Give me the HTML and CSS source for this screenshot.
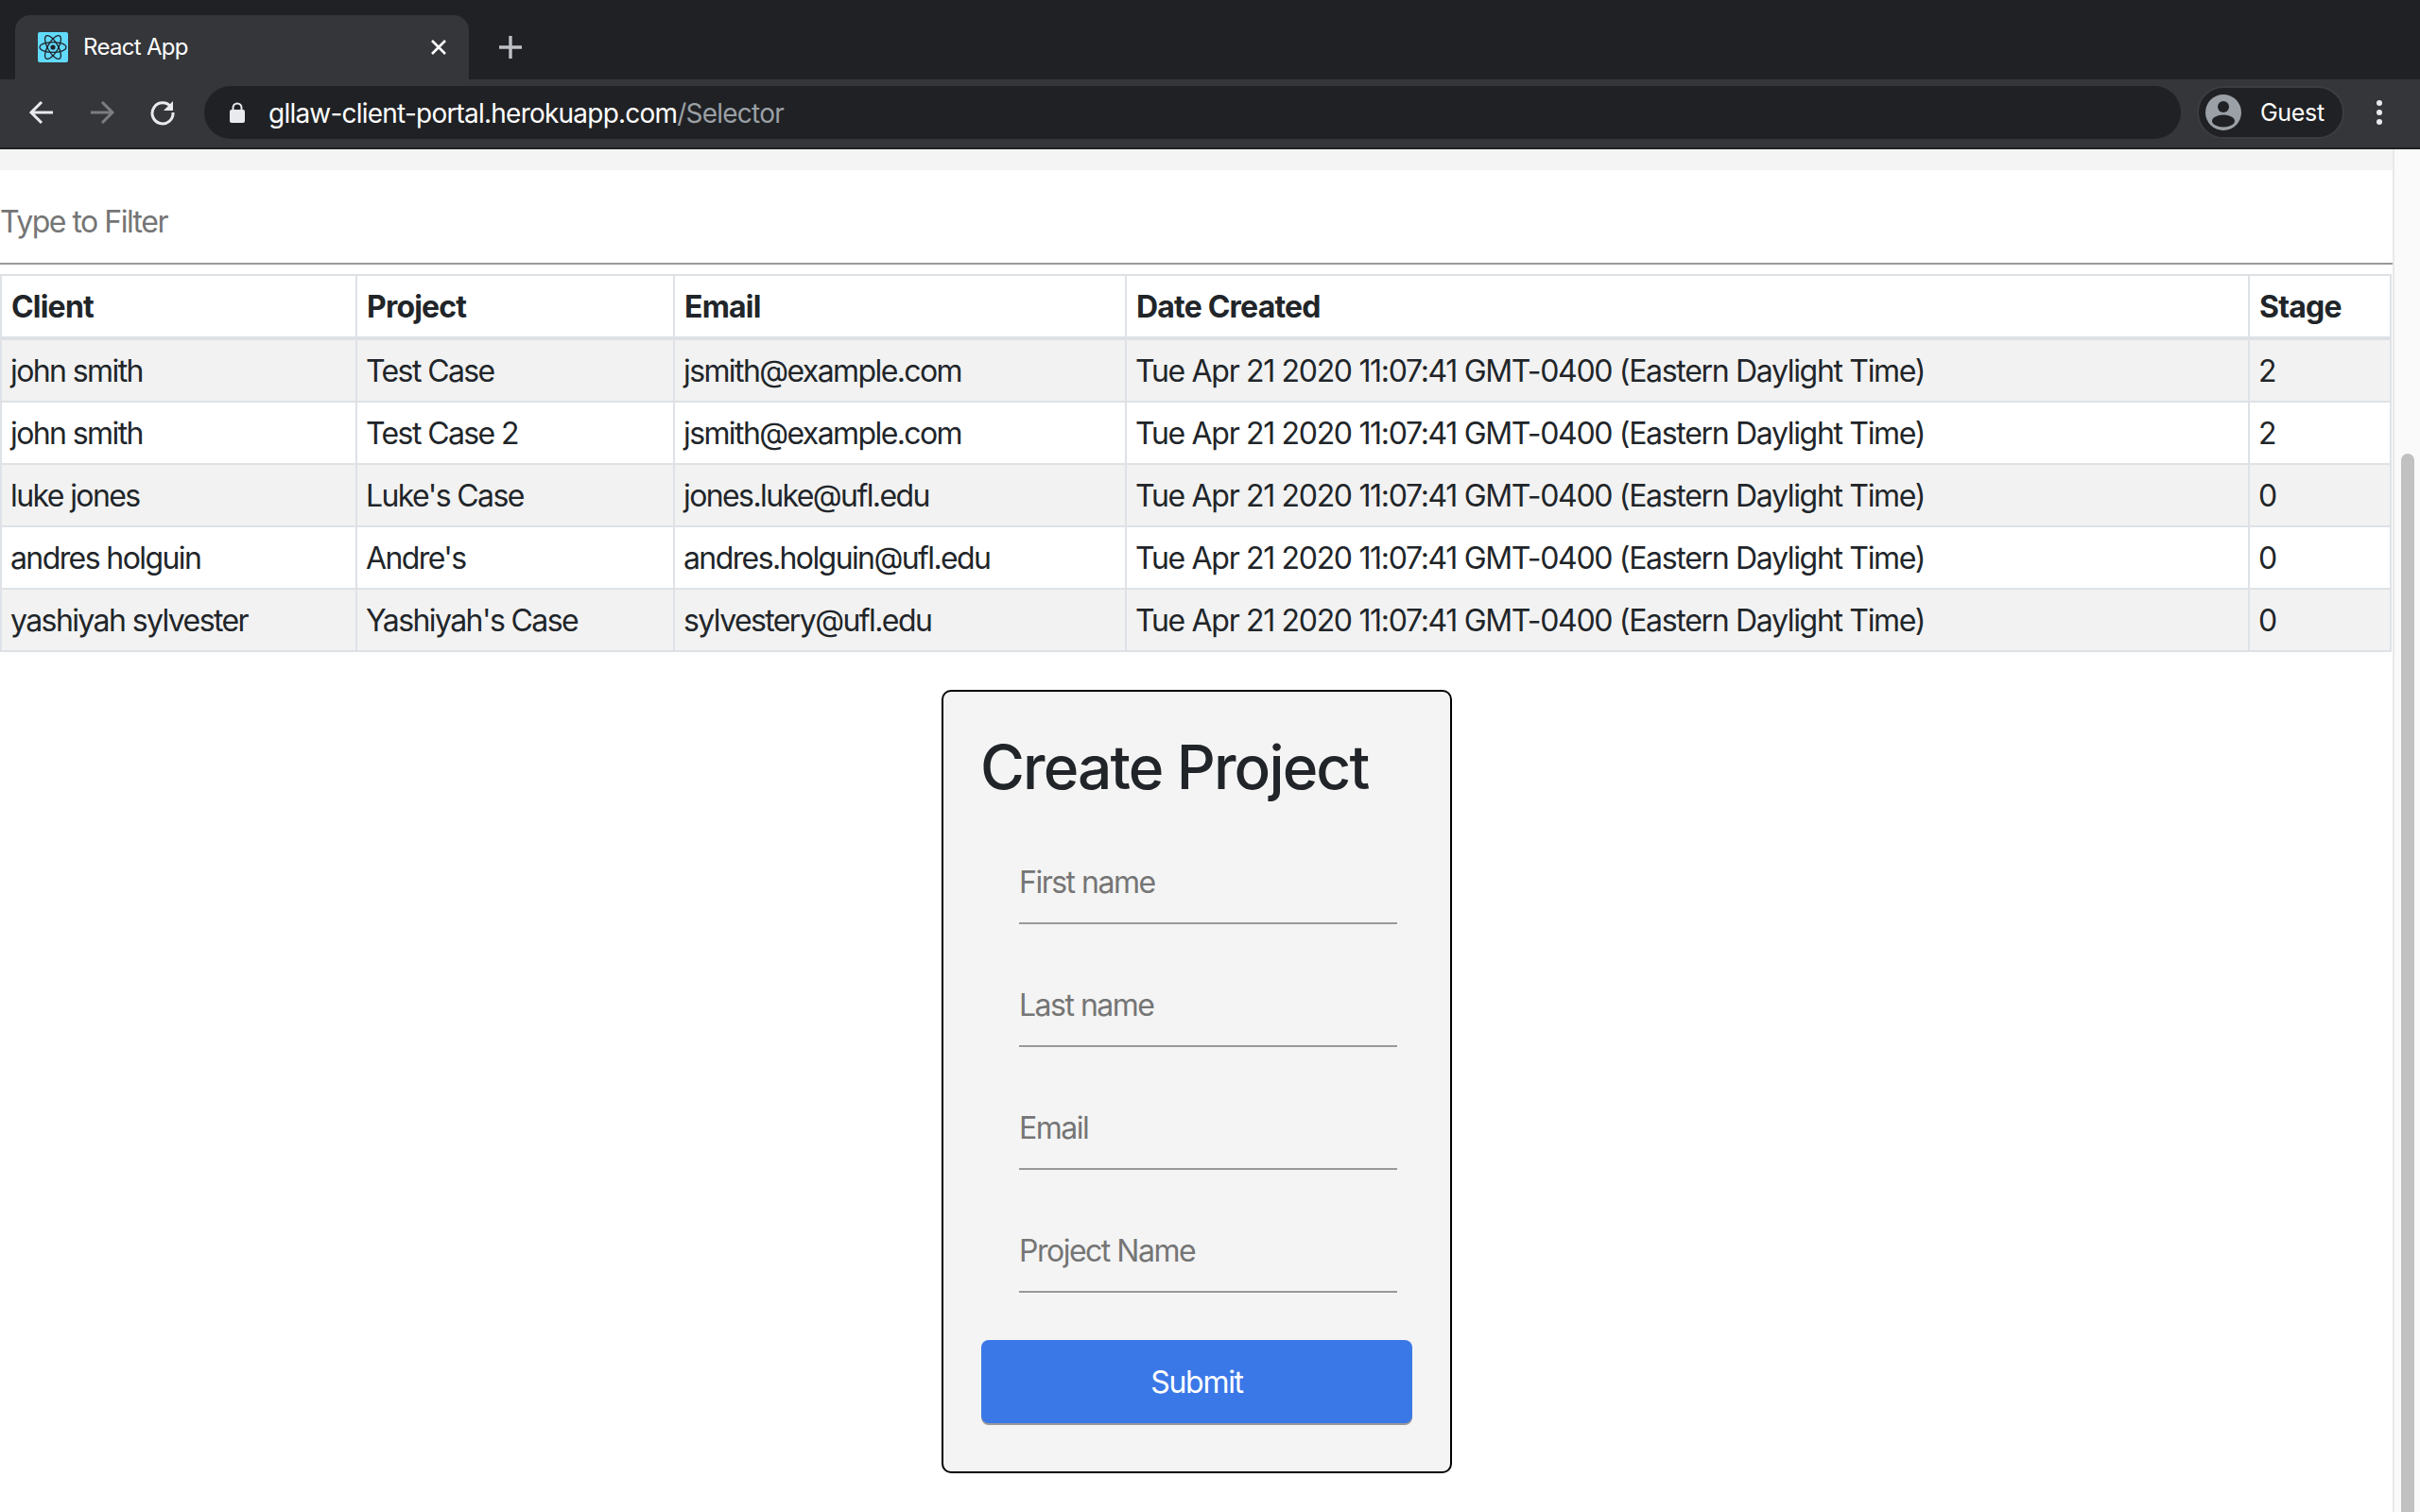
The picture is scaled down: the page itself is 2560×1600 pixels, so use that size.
FILE: index.html
```html
<!DOCTYPE html>
<html lang="en">
<head>
  <meta charset="UTF-8" />
  <title>React App</title>
  <link rel="stylesheet" href="styles.css">
</head>
<body>

  <!-- browser frame -->
  <header class="browser">
    <div class="tabstrip">
      <div class="tab">
        <svg class="favicon" viewBox="0 0 32 32">
          <rect width="32" height="32" rx="2" fill="#61dafb"/>
          <g fill="none" stroke="#20232a" stroke-width="1.3">
            <ellipse cx="16" cy="16" rx="14" ry="5.4"/>
            <ellipse cx="16" cy="16" rx="14" ry="5.4" transform="rotate(60 16 16)"/>
            <ellipse cx="16" cy="16" rx="14" ry="5.4" transform="rotate(120 16 16)"/>
          </g>
          <circle cx="16" cy="16" r="2.6" fill="#20232a"/>
        </svg>
        <span class="tab-title">React App</span>
        <svg class="tab-close" viewBox="0 0 16 16">
          <path d="M1 1 15 15M15 1 1 15" stroke="#fff" stroke-width="2.6" fill="none"/>
        </svg>
      </div>
      <svg class="new-tab" viewBox="0 0 24 24">
        <path d="M12 0V24M0 12H24" stroke="#bdc1c6" stroke-width="3.4" fill="none"/>
      </svg>
    </div>
    <div class="toolbar">
      <svg class="nav-icon" viewBox="0 0 28 28">
        <path d="M26 14H4M14 3 3 14 14 25" stroke="#e8eaed" stroke-width="3" fill="none"/>
      </svg>
      <svg class="nav-icon" viewBox="0 0 28 28">
        <path d="M2 14H24M14 3 25 14 14 25" stroke="#7b7d80" stroke-width="3" fill="none"/>
      </svg>
      <svg class="nav-icon" viewBox="0 0 28 28">
        <path d="M23 8.500A11 11 0 1 0 25 14" stroke="#e8eaed" stroke-width="3" fill="none"/>
        <path d="M25 2V12H15Z" fill="#e8eaed"/>
      </svg>
      <div class="omnibox">
        <svg class="lock" viewBox="0 0 16 22">
          <path d="M3.500 9V6a4.500 4.500 0 0 1 9 0V9" stroke="#e8eaed" stroke-width="2" fill="none"/>
          <rect y="8" width="16" height="14" rx="2" fill="#e8eaed"/>
        </svg>
        <span class="url">gllaw-client-portal.herokuapp.com<span class="url-path">/Selector</span></span>
      </div>
      <div class="profile">
        <svg class="avatar" viewBox="0 0 38 38">
          <circle cx="19" cy="19" r="19" fill="#9aa0a6"/>
          <circle cx="19" cy="13" r="6" fill="#202124"/>
          <ellipse cx="19" cy="28" rx="12" ry="6.500" fill="#202124"/>
        </svg>
        <span>Guest</span>
      </div>
      <div class="menu-dots"><i></i><i></i><i></i></div>
    </div>
  </header>

  <div class="viewport">
    <main class="page">
      <div class="topbar"></div>
      <input class="filter" type="text" placeholder="Type to Filter" />

      <table class="projects">
        <colgroup>
          <col class="col-client" /><col class="col-project" /><col class="col-email" /><col class="col-date" /><col />
        </colgroup>
        <thead>
          <tr><th>Client</th><th>Project</th><th>Email</th><th>Date Created</th><th>Stage</th></tr>
        </thead>
        <tbody>
          <tr><td>john smith</td><td>Test Case</td><td>jsmith@example.com</td><td>Tue Apr 21 2020 11:07:41 GMT-0400 (Eastern Daylight Time)</td><td>2</td></tr>
          <tr><td>john smith</td><td>Test Case 2</td><td>jsmith@example.com</td><td>Tue Apr 21 2020 11:07:41 GMT-0400 (Eastern Daylight Time)</td><td>2</td></tr>
          <tr><td>luke jones</td><td>Luke's Case</td><td>jones.luke@ufl.edu</td><td>Tue Apr 21 2020 11:07:41 GMT-0400 (Eastern Daylight Time)</td><td>0</td></tr>
          <tr><td>andres holguin</td><td>Andre's</td><td>andres.holguin@ufl.edu</td><td>Tue Apr 21 2020 11:07:41 GMT-0400 (Eastern Daylight Time)</td><td>0</td></tr>
          <tr><td>yashiyah sylvester</td><td>Yashiyah's Case</td><td>sylvestery@ufl.edu</td><td>Tue Apr 21 2020 11:07:41 GMT-0400 (Eastern Daylight Time)</td><td>0</td></tr>
        </tbody>
      </table>

      <form class="card">
        <h2>Create Project</h2>
        <input type="text" placeholder="First name" />
        <input type="text" placeholder="Last name" />
        <input type="text" placeholder="Email" />
        <input type="text" placeholder="Project Name" />
        <button type="button">Submit</button>
      </form>
    </main>

    <div class="scrollbar"><div class="thumb"></div></div>
  </div>

</body>
</html>
```

FILE: styles.css
```css
* { box-sizing: border-box; }
html, body { height: 100%; }
body {
  margin: 0;
  display: flex;
  flex-direction: column;
  overflow: hidden;
  font-family: 'Inter', 'Liberation Sans', sans-serif;
  color: #212529;
  background: #fff;
}

/* browser frame */
.browser { flex: none; }
.tabstrip {
  height: 84px;
  padding: 16px 0 0 16px;
  display: flex;
  align-items: flex-start;
  background: #202124;
}
.tab {
  width: 480px;
  height: 68px;
  padding: 0 24px;
  display: flex;
  align-items: center;
  background: #35363a;
  border-radius: 16px 16px 0 0;
  color: #fff;
  font-size: 24px;
  letter-spacing: -0.7px;
}
.favicon { width: 32px; height: 32px; flex: none; }
.tab-title { flex: 1; margin: -2px 0 0 16px; }
.tab-close { width: 16px; height: 16px; }
.new-tab { width: 24px; height: 24px; margin: 22px 0 0 32px; }
.toolbar {
  height: 74px;
  padding: 8px 0 10px 30px;
  display: flex;
  align-items: center;
  background: #35363a;
  border-bottom: 2px solid #202124;
}
.nav-icon { width: 28px; height: 28px; flex: none; margin-right: 36px; }
.omnibox {
  width: 2091px;
  height: 56px;
  margin-left: -6px;
  padding-left: 27px;
  display: flex;
  align-items: center;
  background: #202124;
  border-radius: 28px;
}
.lock { width: 16px; height: 22px; flex: none; }
.url { margin: 2px 0 0 25px; font-size: 28px; color: #fff; letter-spacing: -0.78px; }
.url-path { color: #9aa0a6; }
.profile {
  width: 156px;
  height: 56px;
  margin-left: 17px;
  padding-left: 7px;
  display: flex;
  align-items: center;
  gap: 20px;
  background: #202124;
  border: 2px solid #3c3d41;
  border-radius: 28px;
  color: #fff;
  font-size: 25px;
  letter-spacing: -0.3px;
}
.avatar { width: 38px; height: 38px; }
.menu-dots {
  margin-left: 34px;
  display: flex;
  flex-direction: column;
  gap: 4px;
}
.menu-dots i {
  width: 6px;
  height: 6px;
  border-radius: 50%;
  background: #e8eaed;
}

/* page */
.viewport { flex: 1; min-height: 0; display: flex; }
.page { width: 2531px; flex: none; }
.topbar { height: 22px; background: #f4f4f4; }
.filter {
  display: block;
  width: 100%;
  height: 100px;
  padding: 10px 0 0 0;
  border: none;
  border-bottom: 2px solid #999;
  outline: none;
  font: 32px 'Inter', sans-serif;
  letter-spacing: -1.5px;
}
input::placeholder { color: #757575; opacity: 1; }

.projects {
  width: 2530px;
  margin-top: 10px;
  table-layout: fixed;
  border-collapse: collapse;
  font-size: 32px;
  line-height: 48px;
}
.col-client { width: 376px; }
.col-project { width: 336px; }
.col-email { width: 478px; }
.col-date { width: 1188px; }
.projects th, .projects td {
  padding: 9px 10px 7px;
  border: 2px solid #dee2e6;
  text-align: left;
  white-space: nowrap;
}
.projects th { border-bottom-width: 4px; font-weight: 700; letter-spacing: -0.8px; }
.projects td { padding-left: 9px; letter-spacing: -1.6px; }
.projects td:nth-child(4) { letter-spacing: -1.32px; }
.projects tbody tr:nth-child(odd) { background: #f2f2f2; }

.card {
  width: 540px;
  height: 829px;
  margin: 40px 0 0 996px;
  padding: 42px 40px 0;
  background: #f4f4f4;
  border: 2px solid #000;
  border-radius: 10px;
}
.card h2 {
  margin: 0 0 46px -1px;
  font-size: 64px;
  font-weight: 500;
  line-height: 76px;
  letter-spacing: -1.87px;
}
.card input {
  display: block;
  width: 400px;
  height: 82px;
  margin: 0 0 48px 40px;
  padding: 0 0 6px;
  background: transparent;
  border: none;
  border-bottom: 2px solid #999;
  outline: none;
  font: 32px 'Inter', sans-serif;
  letter-spacing: -1.5px;
}
.card button {
  display: block;
  width: 456px;
  height: 88px;
  margin-top: 50px;
  background: #3b78e7;
  border: none;
  border-radius: 8px;
  box-shadow: 0 2px 0 #999;
  color: #fff;
  font: 32px 'Inter', sans-serif;
  letter-spacing: -1.3px;
}

.scrollbar {
  flex: 1;
  padding: 322px 6px 0 7px;
  background: #fafafa;
  border-left: 2px solid #e8e8e8;
}
.thumb { height: 100%; background: #c1c1c1; border-radius: 8px 8px 0 0; }
```
